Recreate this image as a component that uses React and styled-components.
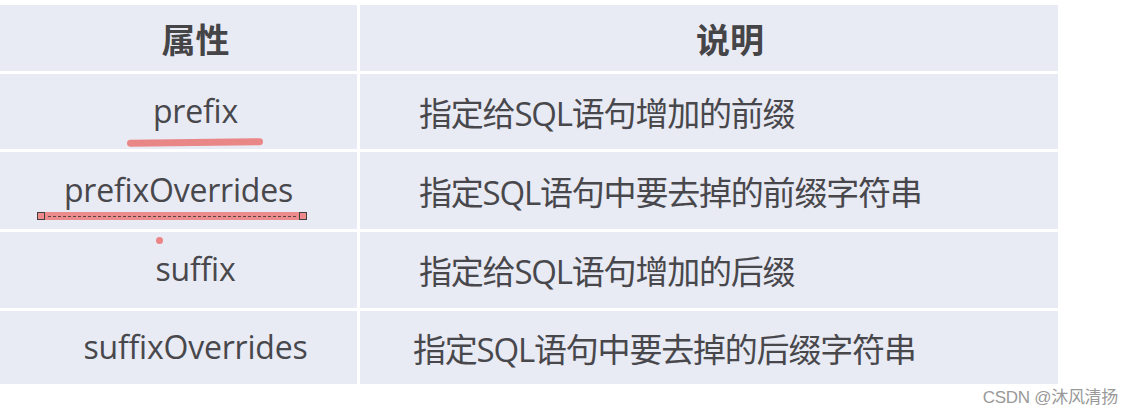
import React from "react";
import styled, { createGlobalStyle } from "styled-components";

const Global = createGlobalStyle`
  html, body { margin: 0; padding: 0; background: #ffffff; }
  body { font-family: "Open Sans", "Noto Sans CJK SC", sans-serif; }
`;

const Page = styled.div`
  width: 1136px;
  height: 414px;
  padding-top: 5px;
  box-sizing: border-box;
  background: #ffffff;
`;

const Table = styled.div`
  display: grid;
  grid-template-columns: 357px 698px;
  grid-template-rows: 66px 75px 77px 76px 73px;
  column-gap: 3px;
  row-gap: 3px;
  width: 1058px;
`;

const Cell = styled.div`
  position: relative;
  background: #e8eaf4;
  display: flex;
  align-items: center;
  color: #48484c;
`;

const HeadCell = styled(Cell)`
  justify-content: center;
  padding-left: ${(p) => p.$shift || 0}px;
  font-family: "Noto Sans CJK SC", sans-serif;
  font-weight: 700;
  font-size: 34px;
  color: #454548;
`;

const NameCell = styled(Cell)`
  justify-content: center;
  padding-left: ${(p) => p.$shift}px;
  font-family: "Open Sans", sans-serif;
  font-size: 32px;
  letter-spacing: -0.2px;
  padding-bottom: 3px;
  box-sizing: border-box;
`;

const DescCell = styled(Cell)`
  padding-left: ${(p) => p.$indent}px;
  font-family: "Open Sans", "Noto Sans CJK SC", sans-serif;
  font-size: 33px;
  letter-spacing: -1.2px;
  box-sizing: border-box;
`;

const Underline = styled.div`
  position: absolute;
  left: 127px;
  top: 65px;
  width: 136px;
  height: 7px;
  border-radius: 4px;
  background: #e98686;
  transform: rotate(-0.7deg);
`;

const Selection = styled.div`
  position: absolute;
  left: 37px;
  top: 60px;
  width: 270px;
  height: 8px;
  background: #ec8b8b;
  display: flex;
  align-items: center;
  justify-content: space-between;
`;

const DashLine = styled.div`
  flex: 1;
  height: 0;
  border-top: 1px dashed #5a4646;
  margin: 0 3px;
`;

const Handle = styled.div`
  width: 6px;
  height: 6px;
  border: 1px solid #4a3f3f;
  background: #ec8b8b;
  flex: none;
`;

const Dot = styled.div`
  position: absolute;
  left: 156px;
  top: 5px;
  width: 7px;
  height: 7px;
  border-radius: 50%;
  background: #eb8585;
`;

const Footer = styled.div`
  width: 1118px;
  text-align: right;
  margin-top: 4px;
  font-family: "Liberation Sans", "Noto Sans CJK SC", sans-serif;
  font-size: 17px;
  line-height: 20px;
  color: #999999;
  letter-spacing: -0.3px;
`;

const rows = [
  { name: "prefix", shift: 34, desc: "指定给SQL语句增加的前缀", indent: 59, mark: "underline" },
  { name: "prefixOverrides", shift: -8, desc: "指定SQL语句中要去掉的前缀字符串", indent: 59, mark: "selection" },
  { name: "suffix", shift: 34, desc: "指定给SQL语句增加的后缀", indent: 59, mark: "dot" },
  { name: "suffixOverrides", shift: 34, desc: "指定SQL语句中要去掉的后缀字符串", indent: 53 },
];

export default function App() {
  return (
    <>
      <Global />
      <Page>
        <Table>
          <HeadCell $shift={34}>属性</HeadCell>
          <HeadCell $shift={42}>说明</HeadCell>
          {rows.map((r) => (
            <React.Fragment key={r.name}>
              <NameCell $shift={r.shift}>
                {r.name}
                {r.mark === "underline" && <Underline />}
                {r.mark === "selection" && (
                  <Selection>
                    <Handle />
                    <DashLine />
                    <Handle />
                  </Selection>
                )}
                {r.mark === "dot" && <Dot />}
              </NameCell>
              <DescCell $indent={r.indent}>{r.desc}</DescCell>
            </React.Fragment>
          ))}
        </Table>
        <Footer>CSDN @沐风清扬</Footer>
      </Page>
    </>
  );
}
